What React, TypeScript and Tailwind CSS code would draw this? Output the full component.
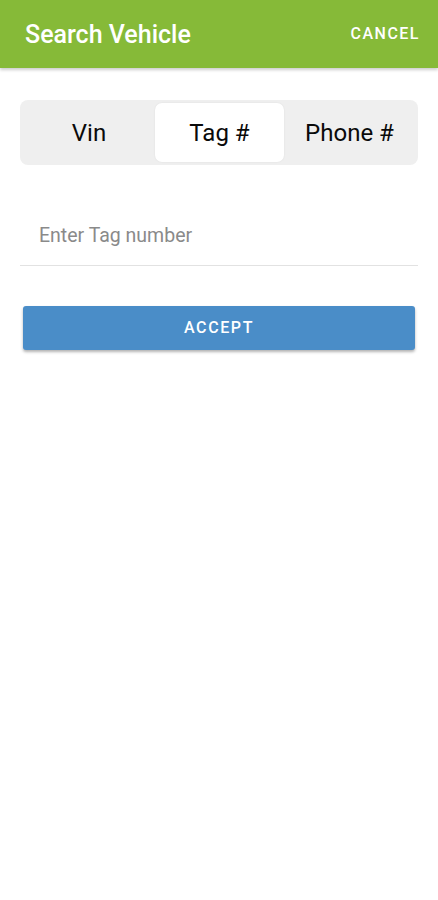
import { useState } from 'react';

const TABS = ['Vin', 'Tag #', 'Phone #'];

export default function App() {
  const [active, setActive] = useState('Tag #');
  const [value, setValue] = useState('');

  return (
    <div className="w-[438px] h-[900px] bg-white font-['Roboto',sans-serif]">
      {/* Header */}
      <div className="h-[68px] bg-[#86ba38] flex items-center justify-between pl-[25px] pr-[18px] shadow-[0_2px_3px_rgba(0,0,0,0.2)]">
        <span className="text-white text-[25px] font-medium pt-[1px]">Search Vehicle</span>
        <button className="text-white text-[16px] font-medium tracking-[1.5px]">CANCEL</button>
      </div>

      <div className="px-[20px] pt-[32px]">
        {/* Segmented tabs */}
        <div className="h-[65px] bg-[#efefef] rounded-[8px] p-[3px] grid grid-cols-[132px_129px_131px] gap-0">
          {TABS.map((tab) => (
            <button
              key={tab}
              onClick={() => setActive(tab)}
              className={`rounded-[7px] text-[24px] text-[#0a0a0a] pt-[1px] ${
                active === tab ? 'bg-white shadow-[0_0_2px_rgba(0,0,0,0.08)]' : ''
              }`}
            >
              {tab}
            </button>
          ))}
        </div>

        {/* Input */}
        <div className="mt-[37px] border-b border-[#e2e2e2]">
          <input
            value={value}
            onChange={(e) => setValue(e.target.value)}
            placeholder="Enter Tag number"
            className="w-full h-[63px] pl-[19px] pt-[4px] text-[19.5px] text-[#222] outline-none placeholder:text-[#8a8a8a]"
          />
        </div>

        {/* Accept */}
        <div className="px-[3px] mt-[40px]">
          <button className="w-full h-[44px] bg-[#4a8dc8] rounded-[3px] shadow-[0_2px_3px_rgba(0,0,0,0.3)] text-white text-[16px] font-medium tracking-[1.6px]">
            ACCEPT
          </button>
        </div>
      </div>
    </div>
  );
}
